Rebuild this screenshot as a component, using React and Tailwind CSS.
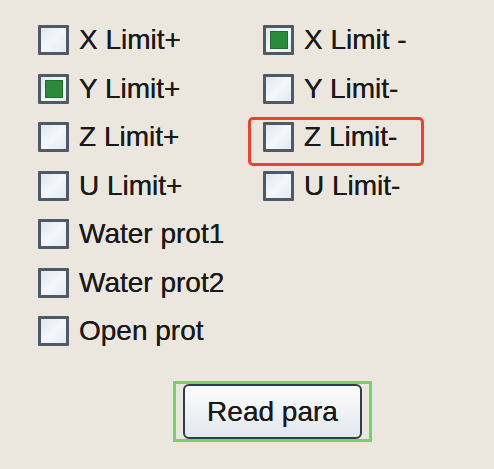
import React from "react";

function Box({ checked }) {
  return (
    <div className="w-[31px] h-[30px] shrink-0 border-[3px] border-[#4f5a68] bg-gradient-to-br from-[#dfe7ef] via-[#f4f7fa] to-[#e4ebf2] flex items-center justify-center rounded-[1px]">
      {checked ? <div className="w-[18px] h-[18px] bg-[#2c8a3c] border border-[#1f6e2c]" /> : null}
    </div>
  );
}

function Row({ label, checked, children }) {
  return (
    <div className="relative flex items-center h-[30px]">
      <Box checked={checked} />
      <span className="ml-[10px] text-[28px] leading-[30px] text-[#1a1a1a] whitespace-nowrap [text-shadow:0_0_0.4px_#1a1a1a]">{label}</span>
      {children}
    </div>
  );
}

export default function App() {
  return (
    <div
      className="w-[494px] h-[469px] bg-[#ebe7de] overflow-hidden"
      style={{ fontFamily: '"Liberation Sans", Arial, sans-serif' }}
    >
      <div className="flex pt-[25px] pl-[38px]">
        <div className="flex flex-col gap-[18.5px] w-[225px]">
          <Row label="X Limit+" />
          <Row label="Y Limit+" checked />
          <Row label="Z Limit+" />
          <Row label="U Limit+" />
          <Row label="Water prot1" />
          <Row label="Water prot2" />
          <Row label="Open prot" />
        </div>
        <div className="flex flex-col gap-[18.5px]">
          <Row label="X Limit -" checked />
          <Row label="Y Limit-" />
          <Row label="Z Limit-">
            <div className="absolute left-[-15px] top-[-5px] w-[176px] h-[49px] border-[3px] border-[#e8432f] rounded-[5px]" />
          </Row>
          <Row label="U Limit-" />
        </div>
      </div>
      <div className="mt-[35px] ml-[173px] w-[199px] h-[61px] border-[3px] border-[#6fd46a] flex items-center justify-center">
        <button className="w-[179px] h-[55px] rounded-[6px] border-2 border-[#2f3d4d] bg-gradient-to-b from-[#fbfcfd] to-[#e3e7ec] text-[28px] text-[#1a1a1a] flex items-center justify-center [text-shadow:0_0_0.4px_#1a1a1a]">
          Read para
        </button>
      </div>
    </div>
  );
}
